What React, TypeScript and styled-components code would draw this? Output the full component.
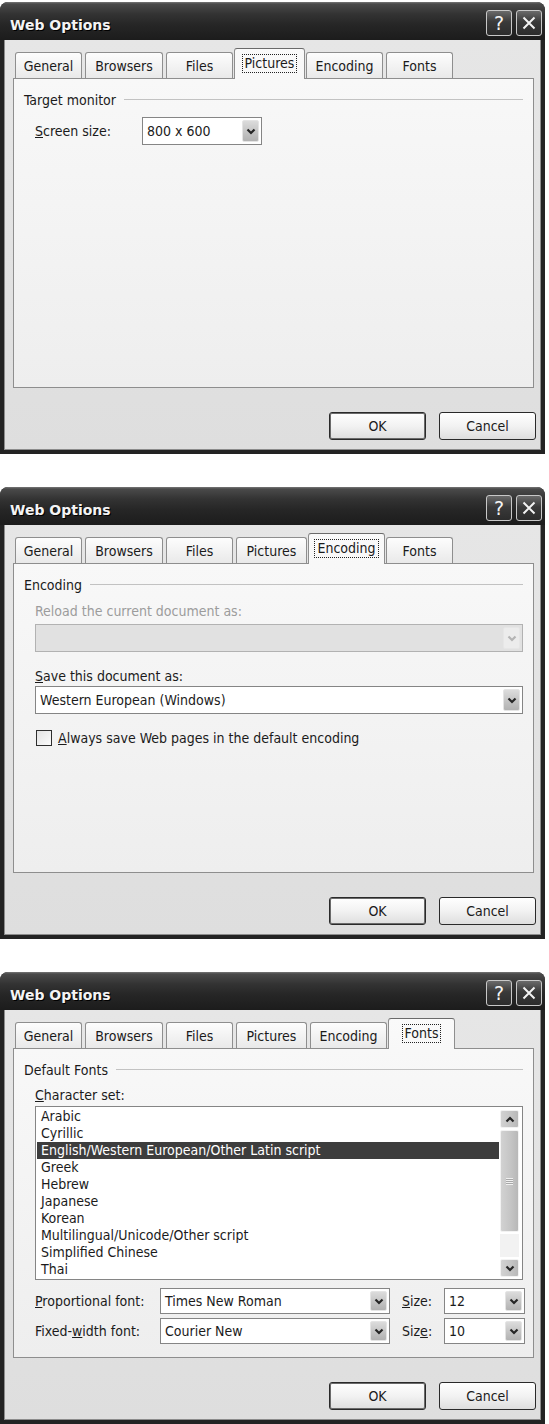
import styled, { createGlobalStyle, css } from 'styled-components'

const FONT = `"DejaVu Sans Condensed", "DejaVu Sans", "Liberation Sans", sans-serif`

const GlobalStyle = createGlobalStyle`
  html, body {
    margin: 0;
    padding: 0;
    background: #ffffff;
  }
  body {
    font-family: ${FONT};
    font-stretch: condensed;
    color: #1b1b1b;
  }
`

const TABS = [
  { name: 'General', w: 67 },
  { name: 'Browsers', w: 78 },
  { name: 'Files', w: 67 },
  { name: 'Pictures', w: 71 },
  { name: 'Encoding', w: 77 },
  { name: 'Fonts', w: 67 },
]

const CHARSETS = [
  'Arabic',
  'Cyrillic',
  'English/Western European/Other Latin script',
  'Greek',
  'Hebrew',
  'Japanese',
  'Korean',
  'Multilingual/Unicode/Other script',
  'Simplified Chinese',
  'Thai',
]

function Chevron({ up, faded }: { up?: boolean; faded?: boolean }) {
  return (
    <svg width='10' height='7' viewBox='0 0 10 7'>
      <path
        d={up ? 'M1.5 5.5 L5 2 L8.5 5.5' : 'M1.5 1.5 L5 5 L8.5 1.5'}
        stroke={faded ? '#b4b4b4' : '#262626'}
        strokeWidth='2.2'
        fill='none'
      />
    </svg>
  )
}

function Dialog({ active, children }: { active: string; children: React.ReactNode }) {
  return (
    <Window>
      <TitleBar>
        <TitleText>Web Options</TitleText>
        <TitleButtons>
          <CaptionButton>?</CaptionButton>
          <CaptionButton>
            <svg width='16' height='16' viewBox='0 0 16 16'>
              <path d='M2.5 2.5 L13.5 13.5 M13.5 2.5 L2.5 13.5' stroke='#f2f2f2' strokeWidth='2' />
            </svg>
          </CaptionButton>
        </TitleButtons>
      </TitleBar>
      <Body>
        <TabStrip>
          {TABS.map((t) => (
            <Tab key={t.name} $w={t.w} $active={t.name === active}>
              {t.name === active ? <Focus>{t.name}</Focus> : t.name}
            </Tab>
          ))}
        </TabStrip>
        <Panel>{children}</Panel>
        <ButtonRow>
          <PushButton $default>OK</PushButton>
          <PushButton>Cancel</PushButton>
        </ButtonRow>
      </Body>
    </Window>
  )
}

function App() {
  return (
    <>
      <GlobalStyle />
      <Page>
        <Dialog active='Pictures'>
          <GroupHeader>Target monitor</GroupHeader>
          <Indent>
            <FieldRow>
              <FieldLabel $w={107}>
                <u>S</u>creen size:
              </FieldLabel>
              <Combo $w={120} $h={28}>
                <span>800 x 600</span>
                <DropButton>
                  <Chevron />
                </DropButton>
              </Combo>
            </FieldRow>
          </Indent>
        </Dialog>

        <Dialog active='Encoding'>
          <GroupHeader>Encoding</GroupHeader>
          <Indent>
            <StackLabel $disabled $top={10} $bottom={4}>
              Reload the current document as:
            </StackLabel>
            <Combo $h={28} $disabled>
              <span />
              <DropButton $disabled>
                <Chevron faded />
              </DropButton>
            </Combo>
            <StackLabel $top={16} $bottom={1}>
              <u>S</u>ave this document as:
            </StackLabel>
            <Combo $h={28}>
              <span>Western European (Windows)</span>
              <DropButton>
                <Chevron />
              </DropButton>
            </Combo>
            <CheckRow>
              <CheckBox />
              <span>
                <u>A</u>lways save Web pages in the default encoding
              </span>
            </CheckRow>
          </Indent>
        </Dialog>

        <Dialog active='Fonts'>
          <GroupHeader>Default Fonts</GroupHeader>
          <Indent>
            <StackLabel $top={9} $bottom={2}>
              <u>C</u>haracter set:
            </StackLabel>
            <ListBox>
              <ListItems>
                {CHARSETS.map((c) => (
                  <ListItem key={c} $selected={c.startsWith('English')}>
                    {c}
                  </ListItem>
                ))}
              </ListItems>
              <ScrollBar>
                <ScrollButton>
                  <Chevron up />
                </ScrollButton>
                <Thumb>
                  <Grip />
                </Thumb>
                <Track />
                <ScrollButton>
                  <Chevron />
                </ScrollButton>
              </ScrollBar>
            </ListBox>
            <FontGrid>
              <FieldLabel>
                <u>P</u>roportional font:
              </FieldLabel>
              <Combo $h={26}>
                <span>Times New Roman</span>
                <DropButton>
                  <Chevron />
                </DropButton>
              </Combo>
              <SizeLabel>
                <u>S</u>ize:
              </SizeLabel>
              <Combo $h={26}>
                <span>12</span>
                <DropButton>
                  <Chevron />
                </DropButton>
              </Combo>
              <FieldLabel>
                Fixed-<u>w</u>idth font:
              </FieldLabel>
              <Combo $h={26}>
                <span>Courier New</span>
                <DropButton>
                  <Chevron />
                </DropButton>
              </Combo>
              <SizeLabel>
                Siz<u>e</u>:
              </SizeLabel>
              <Combo $h={26}>
                <span>10</span>
                <DropButton>
                  <Chevron />
                </DropButton>
              </Combo>
            </FontGrid>
          </Indent>
        </Dialog>
      </Page>
    </>
  )
}

const Page = styled.div`
  width: 549px;
  padding-top: 2px;
  display: flex;
  flex-direction: column;
  gap: 33px;
`

const Window = styled.div`
  width: 545px;
  height: 452px;
  display: flex;
  flex-direction: column;
  border-radius: 8px 8px 0 0;
  background: #1f1f1f;
  font-size: 14px;
`

const TitleBar = styled.div`
  height: 38px;
  flex: none;
  display: flex;
  align-items: center;
  padding: 2px 3px 0 10px;
  box-sizing: border-box;
  border-radius: 8px 8px 0 0;
  background: linear-gradient(#777777 0px, #4a4a4a 2px, #333333 12px, #262626 60%, #1c1c1c 100%);
`

const TitleText = styled.div`
  font-family: "DejaVu Sans", sans-serif;
  font-stretch: normal;
  font-weight: 700;
  font-size: 14px;
  color: #f4f4f4;
  text-shadow: 1px 1px 0 #000;
  padding-top: 5px;
`

const TitleButtons = styled.div`
  margin-left: auto;
  display: flex;
  gap: 4px;
  padding-top: 2px;
`

const CaptionButton = styled.div`
  width: 26px;
  height: 26px;
  box-sizing: border-box;
  border: 1px solid #c8c8c8;
  border-radius: 3px;
  background: linear-gradient(#6a6a6a, #3a3a3a 45%, #2c2c2c);
  display: flex;
  align-items: center;
  justify-content: center;
  color: #f4f4f4;
  font-family: "DejaVu Sans", sans-serif;
  font-stretch: normal;
  font-size: 19px;
  line-height: 1;
`

const Body = styled.div`
  flex: 1;
  display: flex;
  flex-direction: column;
  background: linear-gradient(#e6e6e6, #dedede);
  border: 4px solid #232323;
  border-top: none;
  padding: 8px 5px 0 9px;
  box-shadow: inset 1px 0 0 #8c8c8c, inset -1px 0 0 #8c8c8c, inset 0 -1px 0 #8c8c8c;
`

const TabStrip = styled.div`
  height: 30px;
  display: flex;
  align-items: flex-end;
  gap: 3px;
  padding-left: 2px;
`

const Tab = styled.div<{ $w: number; $active?: boolean }>`
  width: ${(p) => p.$w}px;
  height: 26px;
  box-sizing: border-box;
  display: flex;
  align-items: center;
  justify-content: center;
  border: 1px solid #8e8e8e;
  border-bottom: none;
  border-radius: 3px 3px 0 0;
  background: linear-gradient(#fdfdfd, #e9e9e9);
  padding-top: 1px;
  ${(p) =>
    p.$active &&
    css`
      position: relative;
      z-index: 1;
      height: 31px;
      margin: 0 -2px -1px;
      padding-top: 0;
      padding-bottom: 1px;
      border-top-color: #6a6a6a;
      background: linear-gradient(#fafafa, #f8f8f8);
    `}
`

const Focus = styled.span`
  border: 1px dotted #222;
  padding: 0 2px 1px;
`

const Panel = styled.div`
  height: 310px;
  box-sizing: border-box;
  margin-right: 2px;
  border: 1px solid #8e8e8e;
  background: linear-gradient(#f8f8f8, #eeeeee);
  padding: 12px 10px 0 10px;
`

const GroupHeader = styled.div`
  display: flex;
  align-items: center;
  gap: 8px;
  height: 17px;
  &::after {
    content: '';
    flex: 1;
    height: 1px;
    background: #c2c2c2;
  }
`

const Indent = styled.div`
  padding-left: 11px;
`

const FieldRow = styled.div`
  display: flex;
  align-items: center;
  margin-top: 9px;
`

const FieldLabel = styled.div<{ $w?: number }>`
  ${(p) => p.$w && `width: ${p.$w}px;`}
  white-space: nowrap;
`

const SizeLabel = styled.div`
  padding-left: 12px;
  white-space: nowrap;
`

const StackLabel = styled.div<{ $disabled?: boolean; $top: number; $bottom: number }>`
  margin-top: ${(p) => p.$top}px;
  margin-bottom: ${(p) => p.$bottom}px;
  height: 17px;
  color: ${(p) => (p.$disabled ? '#9c9c9c' : 'inherit')};
`

const Combo = styled.div<{ $w?: number; $h: number; $disabled?: boolean }>`
  ${(p) => p.$w && `width: ${p.$w}px;`}
  height: ${(p) => p.$h}px;
  box-sizing: border-box;
  display: flex;
  align-items: center;
  padding-left: 4px;
  border: 1px solid ${(p) => (p.$disabled ? '#b2b2b2' : '#858585')};
  background: ${(p) => (p.$disabled ? '#e1e1e1' : '#ffffff')};
  white-space: nowrap;
`

const DropButton = styled.div<{ $disabled?: boolean }>`
  margin-left: auto;
  margin-right: 2px;
  width: 17px;
  height: calc(100% - 4px);
  box-sizing: border-box;
  border: 1px solid ${(p) => (p.$disabled ? '#e6e6e6' : '#e4e4e4')};
  border-radius: 2px;
  background: ${(p) =>
    p.$disabled ? '#ececec' : 'linear-gradient(#dcdcdc, #c2c2c2 60%, #b2b2b2)'};
  display: flex;
  align-items: center;
  justify-content: center;
`

const CheckRow = styled.div`
  display: flex;
  align-items: center;
  gap: 6px;
  margin-top: 16px;
  margin-left: 1px;
`

const CheckBox = styled.div`
  width: 16px;
  height: 16px;
  box-sizing: border-box;
  border: 1px solid #2e2e2e;
  background: linear-gradient(135deg, #e2e2e2, #fbfbfb);
`

const ListBox = styled.div`
  height: 174px;
  box-sizing: border-box;
  display: flex;
  border: 1px solid #858585;
  background: #ffffff;
  padding: 1px;
`

const ListItems = styled.div`
  flex: 1;
`

const ListItem = styled.div<{ $selected?: boolean }>`
  height: 17px;
  line-height: 17px;
  padding-left: 4px;
  white-space: nowrap;
  ${(p) =>
    p.$selected &&
    css`
      background: #3d3d3d;
      color: #ffffff;
    `}
`

const ScrollBar = styled.div`
  width: 19px;
  margin: 2px 2px 1px 1px;
  display: flex;
  flex-direction: column;
  gap: 2px;
`

const scrollPart = css`
  box-sizing: border-box;
  border: 1px solid #f2f2f2;
  border-radius: 2px;
  background: linear-gradient(90deg, #d2d2d2, #c4c4c4 60%, #b8b8b8);
`

const ScrollButton = styled.div`
  ${scrollPart}
  height: 18px;
  display: flex;
  align-items: center;
  justify-content: center;
`

const Thumb = styled.div`
  ${scrollPart}
  height: 102px;
  display: flex;
  align-items: center;
  justify-content: center;
`

const Grip = styled.div`
  width: 7px;
  height: 7px;
  background: repeating-linear-gradient(#f0f0f0 0 1px, #a8a8a8 1px 2px);
`

const Track = styled.div`
  flex: 1;
  background: #f2f2f2;
`

const FontGrid = styled.div`
  display: grid;
  grid-template-columns: 125px 230px 54px 81px;
  row-gap: 4px;
  align-items: center;
  margin-top: 8px;
`

const ButtonRow = styled.div`
  display: flex;
  justify-content: flex-end;
  gap: 13px;
  margin-top: 24px;
`

const PushButton = styled.div<{ $default?: boolean }>`
  width: 97px;
  height: 28px;
  box-sizing: border-box;
  display: flex;
  align-items: center;
  justify-content: center;
  border: 1px solid #2a2a2a;
  border-radius: 3px;
  background: linear-gradient(#ffffff, #f2f2f2 50%, #dedede);
  ${(p) => p.$default && 'box-shadow: inset 0 0 0 1px #6a6a6a;'}
`

export default App
